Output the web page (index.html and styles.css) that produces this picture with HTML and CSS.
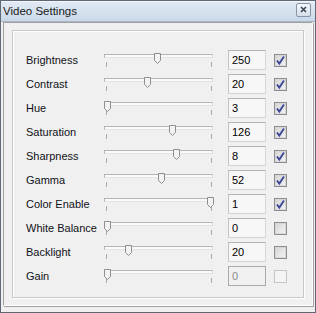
FILE: index.html
```html
<!DOCTYPE html>
<html lang="en">
<head>
    <meta charset="UTF-8">
    <title>Video Settings</title>
    <link rel="stylesheet" href="styles.css">
</head>
<body>
    <div class="window">
        <div class="titlebar">
            <span class="title">Video Settings</span>
            <span class="close">
                <svg width="13" height="12" viewBox="0 0 13 12">
                    <path d="M4 3 L9 8 M9 3 L4 8" stroke="#3c4650" stroke-width="1.6" fill="none"/>
                </svg>
            </span>
        </div>
        <div class="client">
            <div class="frame">
                <div class="group">
                    <div class="row">
                        <span class="name">Brightness</span>
                        <div class="slider">
                            <div class="track"></div>
                            <div class="ticks"><i></i><i></i></div>
                            <svg class="thumb" style="left:51px" width="7" height="11" viewBox="0 0 7 11"><path d="M0.5 0.5 H6.5 V7.5 L3.5 10.5 L0.5 7.5 Z"/></svg>
                        </div>
                        <input class="value" type="text" value="250">
                        <span class="check on"><svg width="11" height="11" viewBox="0 0 11 11"><path d="M2 5.5 L4.3 8.5 L9 1.5"/></svg></span>
                    </div>
                    <div class="row">
                        <span class="name">Contrast</span>
                        <div class="slider">
                            <div class="track"></div>
                            <div class="ticks"><i></i><i></i></div>
                            <svg class="thumb" style="left:41px" width="7" height="11" viewBox="0 0 7 11"><path d="M0.5 0.5 H6.5 V7.5 L3.5 10.5 L0.5 7.5 Z"/></svg>
                        </div>
                        <input class="value" type="text" value="20">
                        <span class="check on"><svg width="11" height="11" viewBox="0 0 11 11"><path d="M2 5.5 L4.3 8.5 L9 1.5"/></svg></span>
                    </div>
                    <div class="row">
                        <span class="name">Hue</span>
                        <div class="slider">
                            <div class="track"></div>
                            <div class="ticks"><i></i><i></i></div>
                            <svg class="thumb" style="left:1px" width="7" height="11" viewBox="0 0 7 11"><path d="M0.5 0.5 H6.5 V7.5 L3.5 10.5 L0.5 7.5 Z"/></svg>
                        </div>
                        <input class="value" type="text" value="3">
                        <span class="check on"><svg width="11" height="11" viewBox="0 0 11 11"><path d="M2 5.5 L4.3 8.5 L9 1.5"/></svg></span>
                    </div>
                    <div class="row">
                        <span class="name">Saturation</span>
                        <div class="slider">
                            <div class="track"></div>
                            <div class="ticks"><i></i><i></i></div>
                            <svg class="thumb" style="left:66px" width="7" height="11" viewBox="0 0 7 11"><path d="M0.5 0.5 H6.5 V7.5 L3.5 10.5 L0.5 7.5 Z"/></svg>
                        </div>
                        <input class="value" type="text" value="126">
                        <span class="check on"><svg width="11" height="11" viewBox="0 0 11 11"><path d="M2 5.5 L4.3 8.5 L9 1.5"/></svg></span>
                    </div>
                    <div class="row">
                        <span class="name">Sharpness</span>
                        <div class="slider">
                            <div class="track"></div>
                            <div class="ticks"><i></i><i></i></div>
                            <svg class="thumb" style="left:70px" width="7" height="11" viewBox="0 0 7 11"><path d="M0.5 0.5 H6.5 V7.5 L3.5 10.5 L0.5 7.5 Z"/></svg>
                        </div>
                        <input class="value" type="text" value="8">
                        <span class="check on"><svg width="11" height="11" viewBox="0 0 11 11"><path d="M2 5.5 L4.3 8.5 L9 1.5"/></svg></span>
                    </div>
                    <div class="row">
                        <span class="name">Gamma</span>
                        <div class="slider">
                            <div class="track"></div>
                            <div class="ticks"><i></i><i></i></div>
                            <svg class="thumb" style="left:55px" width="7" height="11" viewBox="0 0 7 11"><path d="M0.5 0.5 H6.5 V7.5 L3.5 10.5 L0.5 7.5 Z"/></svg>
                        </div>
                        <input class="value" type="text" value="52">
                        <span class="check on"><svg width="11" height="11" viewBox="0 0 11 11"><path d="M2 5.5 L4.3 8.5 L9 1.5"/></svg></span>
                    </div>
                    <div class="row">
                        <span class="name">Color Enable</span>
                        <div class="slider">
                            <div class="track"></div>
                            <div class="ticks"><i></i><i></i></div>
                            <svg class="thumb" style="left:104px" width="7" height="11" viewBox="0 0 7 11"><path d="M0.5 0.5 H6.5 V7.5 L3.5 10.5 L0.5 7.5 Z"/></svg>
                        </div>
                        <input class="value" type="text" value="1">
                        <span class="check on"><svg width="11" height="11" viewBox="0 0 11 11"><path d="M2 5.5 L4.3 8.5 L9 1.5"/></svg></span>
                    </div>
                    <div class="row">
                        <span class="name">White Balance</span>
                        <div class="slider">
                            <div class="track"></div>
                            <div class="ticks"><i></i><i></i></div>
                            <svg class="thumb" style="left:1px" width="7" height="11" viewBox="0 0 7 11"><path d="M0.5 0.5 H6.5 V7.5 L3.5 10.5 L0.5 7.5 Z"/></svg>
                        </div>
                        <input class="value" type="text" value="0">
                        <span class="check"></span>
                    </div>
                    <div class="row">
                        <span class="name">Backlight</span>
                        <div class="slider">
                            <div class="track"></div>
                            <div class="ticks"><i></i><i></i></div>
                            <svg class="thumb" style="left:22px" width="7" height="11" viewBox="0 0 7 11"><path d="M0.5 0.5 H6.5 V7.5 L3.5 10.5 L0.5 7.5 Z"/></svg>
                        </div>
                        <input class="value" type="text" value="20">
                        <span class="check"></span>
                    </div>
                    <div class="row">
                        <span class="name">Gain</span>
                        <div class="slider">
                            <div class="track"></div>
                            <div class="ticks"><i></i><i></i></div>
                            <svg class="thumb" style="left:1px" width="7" height="11" viewBox="0 0 7 11"><path d="M0.5 0.5 H6.5 V7.5 L3.5 10.5 L0.5 7.5 Z"/></svg>
                        </div>
                        <input class="value" type="text" value="0" disabled>
                        <span class="check off"></span>
                    </div>
                </div>
            </div>
        </div>
    </div>
</body>
</html>
```

FILE: styles.css
```css
body {
    margin: 0;
    font-family: "Liberation Sans", Arial, sans-serif;
    font-size: 11px;
    color: #000;
    background: #f0f0f0;
}
.window {
    width: 316px;
    height: 313px;
    box-sizing: border-box;
    border: 1px solid #5f6873;
    background: #f0f0f0;
    display: flex;
    flex-direction: column;
}
.titlebar {
    height: 20px;
    border-bottom: 1px solid #a9b6c4;
    background: linear-gradient(#e3ebf4, #c9d8e9);
    box-shadow: inset 0 1px 0 #f4f8fc;
    display: flex;
    align-items: center;
    justify-content: space-between;
    padding: 0 4px 0 2px;
}
.title {
    font-size: 11.5px;
    color: #1a1a1a;
}
.close {
    width: 13px;
    height: 12px;
    border: 1px solid #8796a6;
    border-radius: 2px;
    background: linear-gradient(#f4f7fb, #d4dfeb);
    display: flex;
    margin-top: -2px;
}
.client {
    flex: 1;
    padding: 0 2px 6px 2px;
    display: flex;
}
.frame {
    flex: 1;
    border: 1px solid #a0a0a0;
    border-right-color: #fff;
    border-bottom-color: #fff;
    box-shadow: 1px 1px 0 #a0a0a0;
    padding: 7px 8px 7px 8px;
}
.group {
    border: 1px solid #c8c8c8;
    box-shadow: inset 1px 1px 0 #fff, 1px 1px 0 #fff;
    padding: 17px 0 9px 13px;
}
.row {
    height: 24px;
    display: flex;
    align-items: center;
}
.name {
    width: 77px;
    color: #101018;
}
.slider {
    position: relative;
    width: 110px;
    height: 24px;
    padding-top: 6px;
    box-sizing: border-box;
}
.track {
    height: 4px;
    box-sizing: border-box;
    margin-left: 1px;
    border: 1px solid #b4b4b4;
    border-right-color: #dcdcdc;
    border-bottom-color: #e4e4e4;
    background: #fafafa;
}
.ticks {
    display: flex;
    justify-content: space-between;
    margin: 4px 1px 0 3px;
}
.ticks i {
    width: 1px;
    height: 5px;
    background: #a8a8a8;
}
.thumb {
    position: absolute;
    top: 5px;
}
.thumb path {
    fill: #f3f3f3;
    stroke: #8e8e8e;
}
.value {
    width: 38px;
    height: 20px;
    box-sizing: border-box;
    margin: 0 0 0 15px;
    padding: 0 0 0 3px;
    border: 1px solid #d4d4d4;
    border-top-color: #b4b4b4;
    border-left-color: #c4c4c4;
    background: #f7f7f7;
    font-family: "Liberation Sans", Arial, sans-serif;
    font-size: 11px;
    color: #000;
    outline: none;
}
.value:disabled {
    border-color: #a9a9a9;
    background: #f0f0f0;
    color: #8d8d8d;
}
.check {
    width: 13px;
    height: 13px;
    box-sizing: border-box;
    margin-left: 8px;
    border: 1px solid #8f8f8f;
    box-shadow: inset 0 0 0 1px #d6d6d6;
    background: linear-gradient(135deg, #d4d4d4, #f4f4f4);
    display: flex;
    align-items: center;
    justify-content: center;
}
.check path {
    fill: none;
    stroke: #3a4896;
    stroke-width: 1.9;
}
.check.off {
    border-color: #c6c6c6;
    box-shadow: none;
    background: #f4f4f4;
}
```
